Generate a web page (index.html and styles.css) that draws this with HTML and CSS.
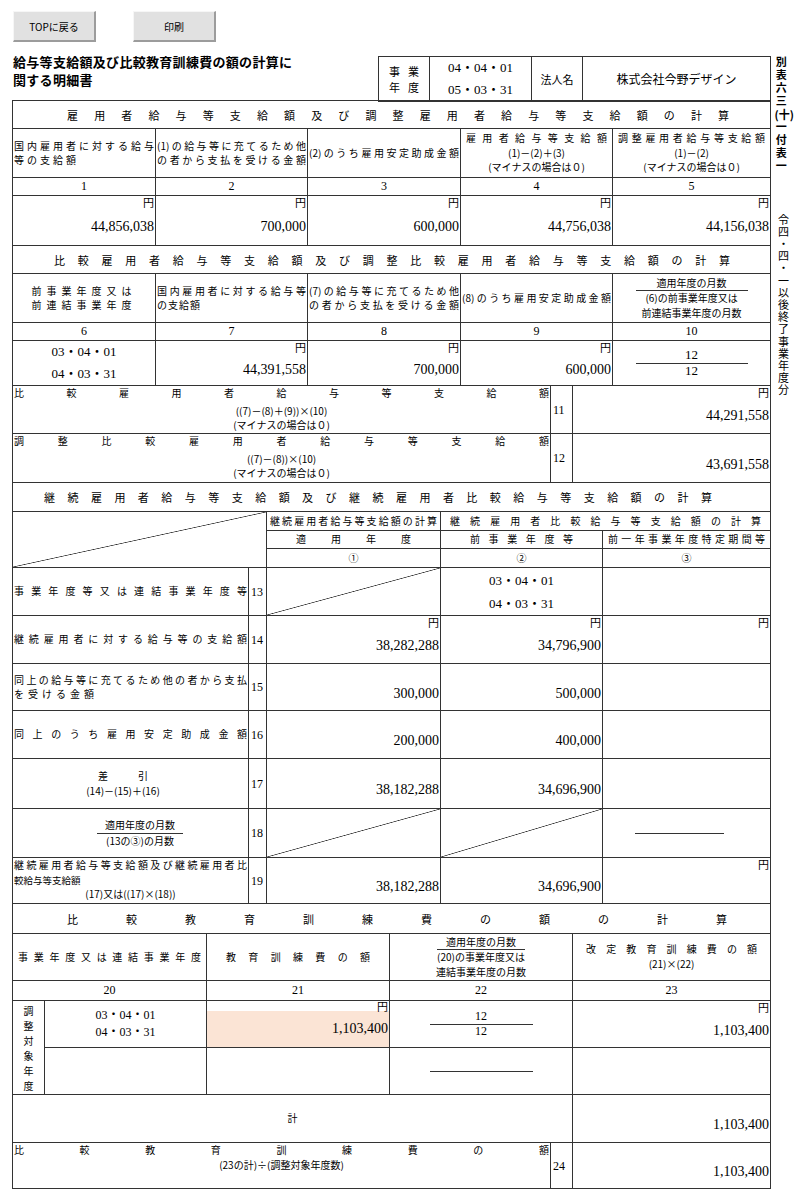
FILE: index.html
```html
<!DOCTYPE html>
<html lang="ja">
<head>
<meta charset="utf-8">
<title>給与等支給額及び比較教育訓練費の額の計算に関する明細書</title>
<link rel="stylesheet" href="styles.css">
</head>
<body>
<div class="page">
 <div class="main">
  <div class="toolbar">
   <button class="btn" type="button">TOPに戻る</button>
   <button class="btn" type="button">印刷</button>
  </div>
  <div class="head">
   <h1 class="doc-title">給与等支給額及び比較教育訓練費の額の計算に<br>関する明細書</h1>
   <table class="hbox">
    <colgroup><col class="c51"><col class="c102"><col class="c51"><col class="c188"></colgroup>
    <tr>
     <td class="hb-lbl"><div class="dist">事業</div><div class="dist">年度</div></td>
     <td class="hb-date"><div>04・04・01</div><div>05・03・31</div></td>
     <td class="hb-nl">法人名</td>
     <td class="hb-name">株式会社今野デザイン</td>
    </tr>
   </table>
  </div>

  <table class="sec s1">
   <colgroup><col class="c143"><col class="c152"><col class="c153"><col class="c152"><col class="c158"></colgroup>
   <tr class="h28"><td colspan="5" class="sect"><div class="dist t1">雇用者給与等支給額及び調整雇用者給与等支給額の計算</div></td></tr>
   <tr class="h49">
    <td class="hd"><div class="dist">国内雇用者に対する給与</div><div class="ls3">等の支給額</div></td>
    <td class="hd"><div class="dist">(1)の給与等に充てるため他</div><div class="dist">の者から支払を受ける金額</div></td>
    <td class="hd"><div class="dist">(2)のうち雇用安定助成金額</div></td>
    <td class="hd top"><div class="dist px4 pt2">雇用者給与等支給額</div><div class="ctr">(1)－(2)＋(3)</div><div class="ctr">(マイナスの場合は０)</div></td>
    <td class="hd top"><div class="dist px4 pt2">調整雇用者給与等支給額</div><div class="ctr">(1)－(2)</div><div class="ctr">(マイナスの場合は０)</div></td>
   </tr>
   <tr class="h18 nums"><td>1</td><td>2</td><td>3</td><td>4</td><td>5</td></tr>
   <tr class="h50">
    <td class="val"><div class="yen">円</div><div class="num">44,856,038</div></td>
    <td class="val"><div class="yen">円</div><div class="num">700,000</div></td>
    <td class="val"><div class="yen">円</div><div class="num">600,000</div></td>
    <td class="val"><div class="yen">円</div><div class="num">44,756,038</div></td>
    <td class="val"><div class="yen">円</div><div class="num">44,156,038</div></td>
   </tr>
  </table>

  <table class="sec">
   <colgroup><col class="c143"><col class="c152"><col class="c153"><col class="c152"><col class="c158"></colgroup>
   <tr class="h28"><td colspan="5" class="sect"><div class="dist t2">比較雇用者給与等支給額及び調整比較雇用者給与等支給額の計算</div></td></tr>
   <tr class="h49">
    <td class="hd"><div class="ctr ls5">前事業年度又は</div><div class="ctr ls5">前連結事業年度</div></td>
    <td class="hd"><div class="dist">国内雇用者に対する給与等</div><div class="ls1">の支給額</div></td>
    <td class="hd"><div class="dist">(7)の給与等に充てるため他</div><div class="dist">の者から支払を受ける金額</div></td>
    <td class="hd"><div class="dist">(8)のうち雇用安定助成金額</div></td>
    <td class="hd"><div class="fnum w112">適用年度の月数</div><div class="ctr">(6)の前事業年度又は</div><div class="ctr">前連結事業年度の月数</div></td>
   </tr>
   <tr class="h18 nums"><td>6</td><td>7</td><td>8</td><td>9</td><td>10</td></tr>
   <tr class="h45">
    <td class="dates d22"><div>03・04・01</div><div>04・03・31</div></td>
    <td class="val"><div class="yen">円</div><div class="num">44,391,558</div></td>
    <td class="val"><div class="yen">円</div><div class="num">700,000</div></td>
    <td class="val"><div class="yen">円</div><div class="num">600,000</div></td>
    <td class="fr"><div class="fnum w112">12</div><div class="ctr">12</div></td>
   </tr>
  </table>

  <table class="sec">
   <colgroup><col class="c538"><col class="c22"><col class="c198"></colgroup>
   <tr class="h48">
    <td class="lbl top"><div class="dist">比較雇用者給与等支給額</div><div class="ctr mt3">((7)－(8)＋(9))×(10)</div><div class="ctr">(マイナスの場合は０)</div></td>
    <td class="no">11</td>
    <td class="val"><div class="yen">円</div><div class="num">44,291,558</div></td>
   </tr>
   <tr class="h49">
    <td class="lbl top"><div class="dist">調整比較雇用者給与等支給額</div><div class="ctr mt3">((7)－(8))×(10)</div><div class="ctr">(マイナスの場合は０)</div></td>
    <td class="no">12</td>
    <td class="val"><div class="yen"></div><div class="num">43,691,558</div></td>
   </tr>
  </table>

  <table class="sec">
   <colgroup><col class="c236"><col class="c18"><col class="c174"><col class="c162"><col class="c168"></colgroup>
   <tr class="h29"><td colspan="5" class="sect"><div class="dist t3">継続雇用者給与等支給額及び継続雇用者比較給与等支給額の計算</div></td></tr>
   <tr class="h19">
    <td colspan="2" rowspan="3" class="diag"></td>
    <td class="hd"><div class="dist px2">継続雇用者給与等支給額の計算</div></td>
    <td colspan="2" class="hd"><div class="dist px8">継続雇用者比較給与等支給額の計算</div></td>
   </tr>
   <tr class="h18">
    <td class="hd"><div class="dist px28">適用年度</div></td>
    <td class="hd"><div class="dist px28">前事業年度等</div></td>
    <td class="hd"><div class="dist px4">前一年事業年度特定期間等</div></td>
   </tr>
   <tr class="h19">
    <td class="hd ctr">①</td><td class="hd ctr">②</td><td class="hd ctr">③</td>
   </tr>
   <tr class="h48">
    <td class="lbl"><div class="dist">事業年度等又は連結事業年度等</div></td>
    <td class="no">13</td>
    <td class="diag"></td>
    <td class="dates d23"><div>03・04・01</div><div>04・03・31</div></td>
    <td></td>
   </tr>
   <tr class="h48">
    <td class="lbl"><div class="dist">継続雇用者に対する給与等の支給額</div></td>
    <td class="no">14</td>
    <td class="val"><div class="yen">円</div><div class="num">38,282,288</div></td>
    <td class="val"><div class="yen">円</div><div class="num">34,796,900</div></td>
    <td class="val"><div class="yen">円</div><div class="num"></div></td>
   </tr>
   <tr class="h47">
    <td class="lbl"><div class="dist">同上の給与等に充てるため他の者から支払</div><div class="ls4">を受ける金額</div></td>
    <td class="no">15</td>
    <td class="val"><div class="yen"></div><div class="num">300,000</div></td>
    <td class="val"><div class="yen"></div><div class="num">500,000</div></td>
    <td></td>
   </tr>
   <tr class="h48">
    <td class="lbl"><div class="dist">同上のうち雇用安定助成金額</div></td>
    <td class="no">16</td>
    <td class="val"><div class="yen"></div><div class="num">200,000</div></td>
    <td class="val"><div class="yen"></div><div class="num">400,000</div></td>
    <td></td>
   </tr>
   <tr class="h50">
    <td class="lbl shift"><div class="ctr">差　　　引</div><div class="ctr">(14)－(15)＋(16)</div></td>
    <td class="no">17</td>
    <td class="val"><div class="yen"></div><div class="num">38,182,288</div></td>
    <td class="val"><div class="yen"></div><div class="num">34,696,900</div></td>
    <td></td>
   </tr>
   <tr class="h49">
    <td class="lbl lbl18"><div class="fnum w86">適用年度の月数</div><div class="ctr">(13の③)の月数</div></td>
    <td class="no">18</td>
    <td class="diag"></td>
    <td class="diag"></td>
    <td><div class="hline h3line"></div></td>
   </tr>
   <tr class="h46">
    <td class="lbl top"><div class="dist">継続雇用者給与等支給額及び継続雇用者比</div><div class="small">較給与等支給額</div><div class="ctr">(17)又は((17)×(18))</div></td>
    <td class="no">19</td>
    <td class="val"><div class="yen"></div><div class="num">38,182,288</div></td>
    <td class="val"><div class="yen"></div><div class="num">34,696,900</div></td>
    <td class="val"><div class="yen">円</div><div class="num"></div></td>
   </tr>
  </table>

  <table class="sec">
   <colgroup><col class="c32"><col class="c162"><col class="c183"><col class="c161"><col class="c22"><col class="c198"></colgroup>
   <tr class="h30"><td colspan="6" class="sect"><div class="dist t4">比較教育訓練費の額の計算</div></td></tr>
   <tr class="h47">
    <td colspan="2" class="hd"><div class="dist px4">事業年度又は連結事業年度</div></td>
    <td class="hd"><div class="dist px18">教育訓練費の額</div></td>
    <td colspan="2" class="hd"><div class="fnum w88">適用年度の月数</div><div class="ctr">(20)の事業年度又は</div><div class="ctr">連結事業年度の月数</div></td>
    <td class="hd top"><div class="dist px12 pt8">改定教育訓練費の額</div><div class="ctr">(21)×(22)</div></td>
   </tr>
   <tr class="h20 nums"><td colspan="2">20</td><td>21</td><td colspan="2">22</td><td>23</td></tr>
   <tr class="h47">
    <td rowspan="2" class="vlabel">調<br>整<br>対<br>象<br>年<br>度</td>
    <td class="dates d17"><div>03・04・01</div><div>04・03・31</div></td>
    <td class="val"><div class="yen yen-s">円</div><div class="num input">1,103,400</div></td>
    <td colspan="2" class="fr fr12"><div class="fnum w103">12</div><div class="ctr">12</div></td>
    <td class="val"><div class="yen">円</div><div class="num">1,103,400</div></td>
   </tr>
   <tr class="h47">
    <td></td>
    <td></td>
    <td colspan="2"><div class="hline w103"></div></td>
    <td></td>
   </tr>
   <tr class="h48">
    <td colspan="5" class="ctr total">計</td>
    <td class="val"><div class="yen"></div><div class="num">1,103,400</div></td>
   </tr>
   <tr class="h46">
    <td colspan="4" class="lbl top"><div class="dist">比較教育訓練費の額</div><div class="ctr">(23の計)÷(調整対象年度数)</div></td>
    <td class="no">24</td>
    <td class="val"><div class="yen"></div><div class="num">1,103,400</div></td>
   </tr>
  </table>
 </div>

 <div class="side">
  <div class="vt vt1">別表六三<span class="paren">(十)</span>一付表一</div>
  <div class="vt vt2">令四・四・一以後終了事業年度分</div>
 </div>
</div>
</body>
</html>
```

FILE: styles.css
```css
* { box-sizing: border-box; }
html, body { margin: 0; padding: 0; background: #fff; }
body {
  color: #000;
  font-family: "Noto Sans CJK JP", "Noto Sans", sans-serif;
  font-size: 10px;
  line-height: 14.5px;
}
.page { display: flex; width: 796px; }
.main { width: 759px; margin-left: 12px; flex: none; }
.side { flex: 1; padding-top: 56px; display: flex; flex-direction: column; align-items: center; }

/* toolbar */
.toolbar { display: flex; gap: 37px; height: 41px; padding-top: 11px; padding-left: 1px; }
.btn {
  width: 83px; height: 31px; padding: 0;
  background: #e1e1e1; color: #000;
  font-family: "Noto Sans CJK JP", sans-serif; font-size: 10px;
  border-style: solid; border-width: 1px 2px 2px 1px;
  border-color: #f6f6f6 #9c9c9c #9c9c9c #f6f6f6;
}

/* heading */
.head { display: flex; justify-content: space-between; align-items: flex-start; height: 60px; }
.doc-title { margin: 12px 0 0 1px; font-size: 13px; line-height: 18px; font-weight: 700; letter-spacing: 0.3px; }
.hbox {
  margin-top: 15px; width: 393px; table-layout: fixed;
  border-collapse: separate; border-spacing: 0;
  border-top: 1px solid #333; border-left: 1px solid #333;
}
.hbox td {
  height: 44px; padding: 0; text-align: center; vertical-align: middle;
  border-right: 1px solid #333; border-bottom: 1px solid #333;
}
.hbox td.hb-lbl { padding: 0 10px; font-size: 11px; line-height: 16px; }
.hb-date { font-family: "Liberation Serif", "Noto Sans CJK JP", serif; font-size: 13px; line-height: 22px; }
.hb-nl { font-size: 11px; }
.hb-name { font-size: 12px; }

/* columns */
.c18 { width: 18px; } .c22 { width: 22px; } .c32 { width: 32px; }
.c51 { width: 51px; } .c102 { width: 102px; } .c188 { width: 188px; }
.c143 { width: 143px; } .c152 { width: 152px; } .c153 { width: 153px; } .c158 { width: 158px; }
.c161 { width: 161px; } .c162 { width: 162px; } .c168 { width: 168px; } .c174 { width: 174px; }
.c183 { width: 183px; } .c198 { width: 198px; } .c236 { width: 236px; } .c538 { width: 538px; }

/* row heights */
.h18 { --h: 18px; } .h19 { --h: 19px; } .h20 { --h: 20px; }
.h28 { --h: 28px; } .h29 { --h: 29px; } .h30 { --h: 30px; }
.h45 { --h: 45px; } .h46 { --h: 46px; } .h47 { --h: 47px; }
.h48 { --h: 48px; } .h49 { --h: 49px; } .h50 { --h: 50px; }

/* section tables */
.sec {
  width: 759px; table-layout: fixed;
  border-collapse: separate; border-spacing: 0;
  border-left: 1px solid #333;
}
.s1 { border-top: 1px solid #333; margin-top: -1px; }
.sec td {
  height: var(--h); padding: 0; vertical-align: middle;
  border-right: 1px solid #333; border-bottom: 1px solid #333;
}
.sec td.sect { font-size: 11px; line-height: 16px; }
.t1 { padding: 0 41px 0 54px; }
.t2 { padding: 0 40px 0 41px; }
.t3 { padding: 0 58px 0 31px; }
.t4 { padding: 0 43px 0 54px; }

.dist { text-align: justify; text-align-last: justify; }
.ctr { text-align: center; }
.sec td.top { vertical-align: top; }
.px2 { padding: 0 2px; } .px4 { padding: 0 4px; } .px8 { padding: 0 8px; }
.px12 { padding: 0 12px; } .px18 { padding: 0 18px; } .px28 { padding: 0 28px; }
.pt2 { margin-top: 2px; } .pt8 { margin-top: 8px; }
.mt3 { margin-top: 3px; }
.ls1 { letter-spacing: 1px; } .ls3 { letter-spacing: 3px; }
.ls4 { letter-spacing: 4px; } .ls5 { letter-spacing: 5px; }

.sec td.hd { padding: 0 1px; }
.sec td.lbl { padding: 0 1px; }
.sec td.shift { padding-right: 16px; }
.sec td.lbl18 { padding-left: 20px; }
.small { font-size: 9.5px; }
.total { font-size: 10px; }

.nums td {
  text-align: center;
  font-family: "Liberation Serif", serif; font-size: 12px; line-height: 13px;
}
.sec td.no {
  padding-left: 2px;
  font-family: "Liberation Serif", serif; font-size: 12px; line-height: 14px;
}

/* values */
.sec td.val { vertical-align: top; text-align: right; }
.yen { height: 13px; line-height: 13px; font-size: 11px; padding-right: 1px; }
.yen-s { height: 10px; line-height: 11px; }
.num {
  font-family: "Liberation Serif", serif; font-size: 14px;
  line-height: calc(var(--h) - 14px); padding-right: 1px;
}
.yen-s + .num { line-height: calc(var(--h) - 11px); }
.input { background: #fbe4d5; }

.dates { text-align: center; font-family: "Liberation Serif", "Noto Sans CJK JP", serif; font-size: 13px; }
.d22 { line-height: 22px; }
.d23 { line-height: 23px; }
.d17 { line-height: 17px; font-size: 12px; }

/* fractions */
.fnum { margin: 0 auto; border-bottom: 1px solid #333; text-align: center; }
.w86 { width: 86px; } .w88 { width: 88px; } .w103 { width: 103px; } .w112 { width: 112px; }
.fr { font-family: "Liberation Serif", serif; font-size: 13px; line-height: 14.5px; }
.fr12 { font-size: 12px; line-height: 13.5px; }
.hline { height: 1px; background: #333; margin: 0 auto; }
.h3line { width: 89px; margin-left: 32px; }

.diag {
  background: linear-gradient(to bottom right, transparent calc(50% - 0.7px), #333 50%, transparent calc(50% + 0.7px));
}
.vlabel { text-align: center; font-size: 10px; line-height: 15px; }

/* side vertical text */
.vt {
  writing-mode: vertical-rl;
  text-orientation: upright;
  font-size: 11px;
  line-height: 16px;
  white-space: nowrap;
}
.vt1 { font-weight: 700; letter-spacing: 2px; height: 118px; }
.vt2 { margin-top: 40px; letter-spacing: 1.2px; height: 185px; }
.paren {
  display: inline-block;
  writing-mode: horizontal-tb;
  letter-spacing: 0;
  line-height: 13px;
  height: 13px;
  vertical-align: middle;
}
```
